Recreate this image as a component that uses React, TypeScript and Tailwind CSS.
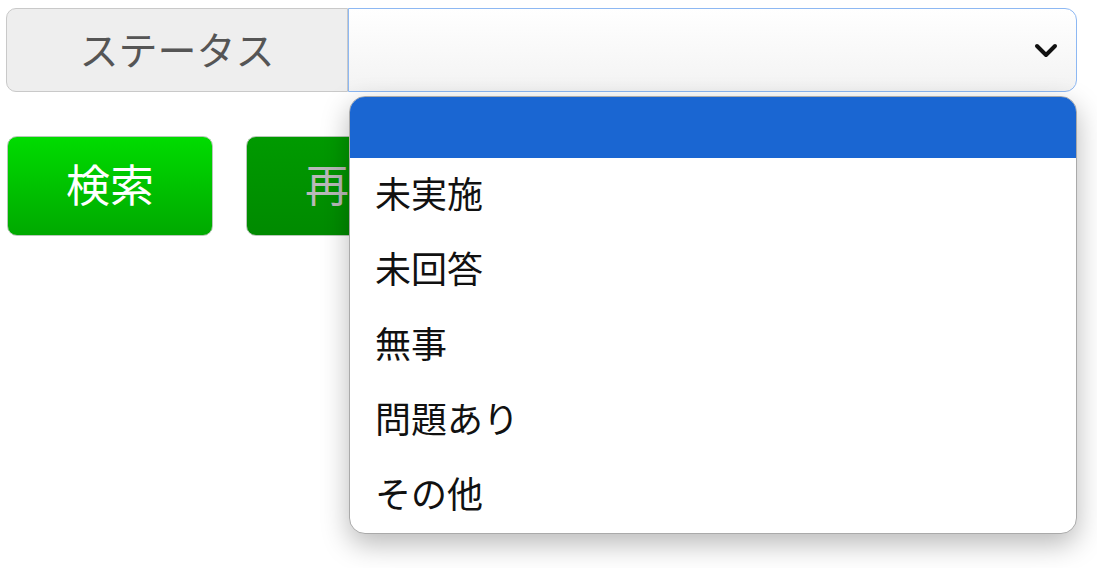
import React from 'react';

const options = ['未実施', '未回答', '無事', '問題あり', 'その他'];

const App = () => {
  return (
    <main
      className="relative min-h-screen bg-white"
      style={{ fontFamily: '"Noto Sans CJK JP", "Noto Sans", sans-serif' }}
    >
      <div className="pl-[6px] pt-[8px]">
        {/* Status row */}
        <div className="flex h-[84px]">
          <div className="flex w-[342px] items-center justify-center rounded-l-[10px] border border-[#c9c9c9] bg-[#eeeeee] pb-[4px] text-[39px] text-[#555]">
            ステータス
          </div>
          <div className="relative flex w-[729px] items-center justify-end rounded-r-[12px] border-[1.5px] border-[#8db8f3] bg-gradient-to-b from-white to-[#f3f3f3] pr-[18px]">
            <svg width="24" height="16" viewBox="0 0 24 16" fill="none">
              <path d="M3 4l9 9 9-9" stroke="#111" strokeWidth="4" strokeLinecap="round" strokeLinejoin="round" />
            </svg>
          </div>
        </div>

        {/* Buttons */}
        <div className="mt-[44px] flex gap-[33px] pl-[1px]">
          <button className="flex h-[100px] w-[206px] items-center justify-center rounded-[10px] border border-[#b8c8b8] bg-gradient-to-b from-[#00dc00] to-[#00a900] pb-[6px] text-[44px] text-white">
            検索
          </button>
          <button className="flex h-[100px] w-[206px] items-center justify-center rounded-[10px] border border-[#b8c8b8] bg-gradient-to-b from-[#009a00] to-[#008a00] pb-[6px] text-[44px] text-[#b9b9b9]">
            再送
          </button>
        </div>
      </div>

      {/* Open dropdown */}
      <div className="absolute left-[349px] top-[96px] w-[728px] overflow-hidden rounded-[16px] border border-[#aaaaaa] bg-white shadow-[0_10px_28px_rgba(0,0,0,0.28)]">
        <div className="h-[61px] bg-[#1a66d2]" />
        {options.map((o) => (
          <div key={o} className="flex h-[75px] items-center pb-[8px] pl-[25px] text-[36px] text-[#111]">
            {o}
          </div>
        ))}
      </div>
    </main>
  );
};

export default App;
